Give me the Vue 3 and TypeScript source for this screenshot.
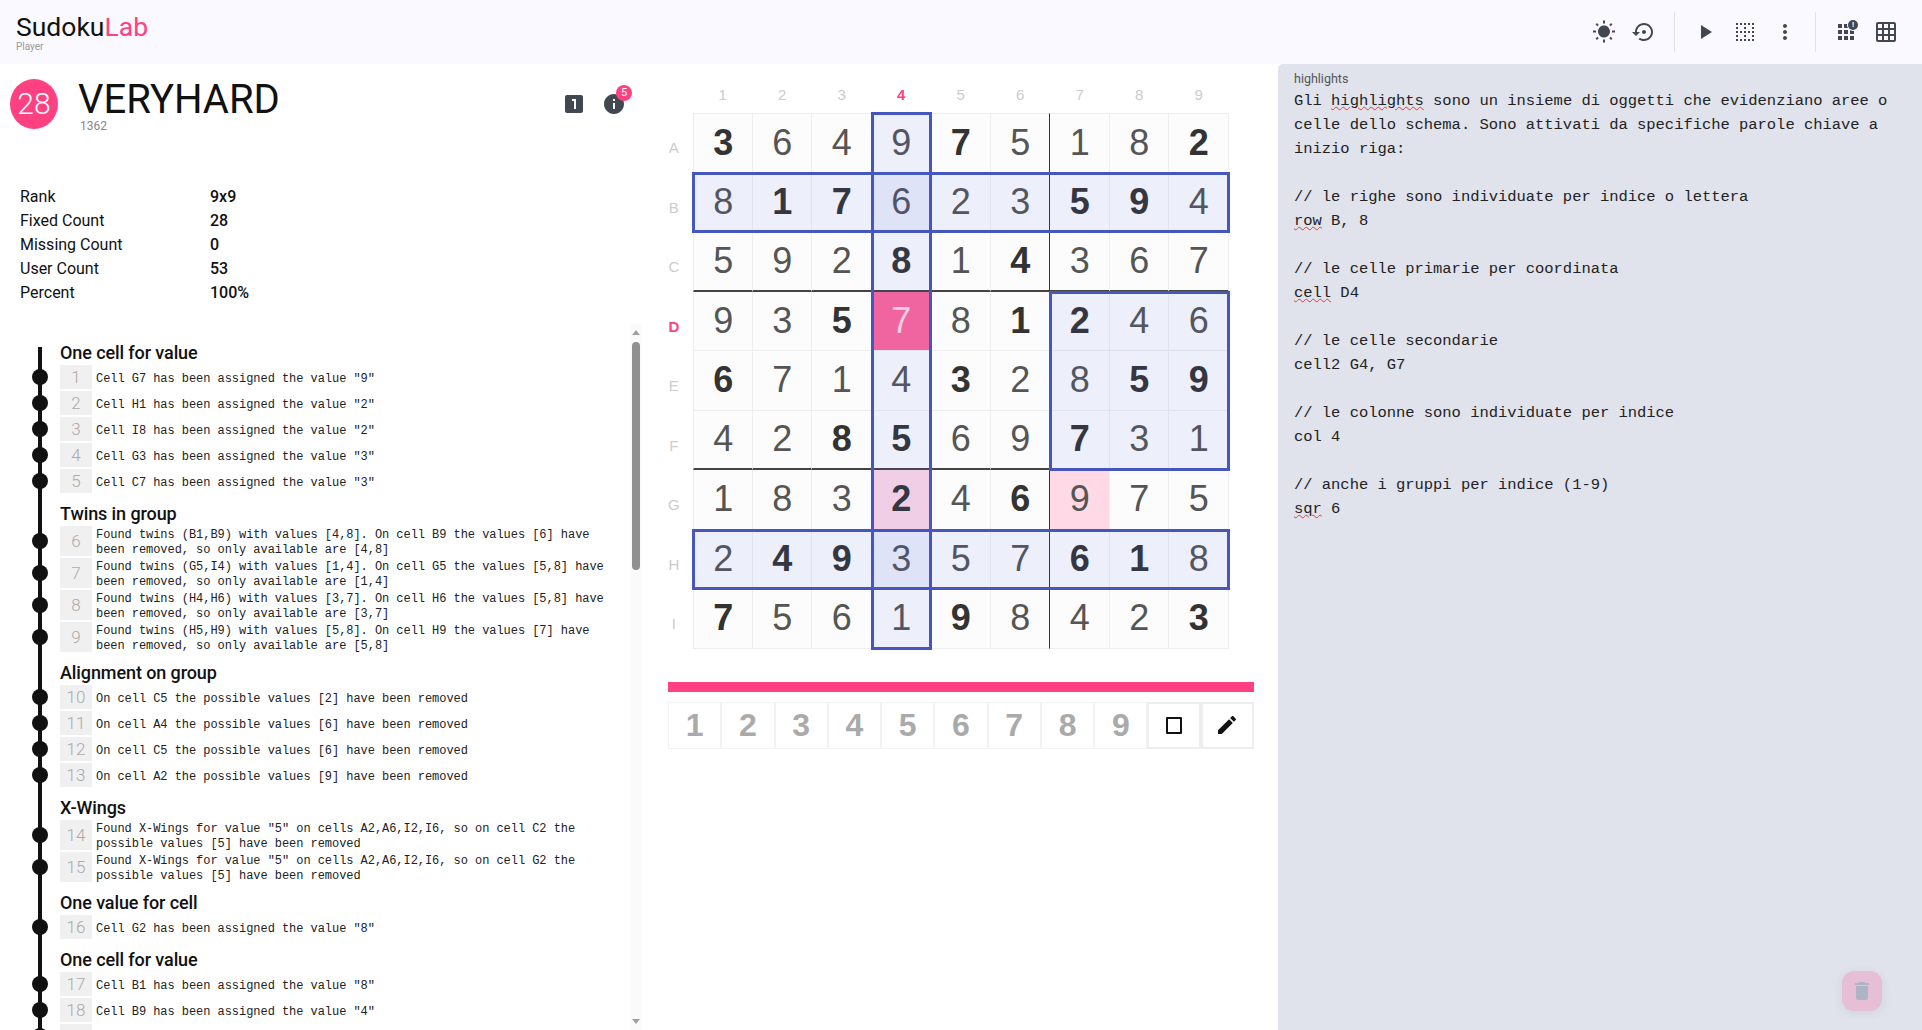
<script setup lang="ts">
import { computed } from 'vue';

interface LogGroup {
    title: string;
    items: string[];
}

const CELL = 59.5;
const rowNames: string[] = ['A', 'B', 'C', 'D', 'E', 'F', 'G', 'H', 'I'];
const columns: number[] = [1, 2, 3, 4, 5, 6, 7, 8, 9];

const values: string[] = [
    '364975182', '817623594', '592814367',
    '935781246', '671432859', '428569731',
    '183246975', '249357618', '756198423',
];
const fixed: string[] = [
    '100010001', '011000110', '000101000',
    '001001100', '100010011', '001100100',
    '000101000', '011000110', '100010001',
];

const cells = computed(() => values.flatMap((line: string, r: number) =>
    line.split('').map((value: string, c: number) => ({
        key: `${r}-${c}`,
        value,
        classes: {
            bold: fixed[r][c] === '1',
            primary: r === 3 && c === 3,
            secondary: (r === 6 && c === 3) || (r === 6 && c === 6),
            'line-right': c === 5 || c === 2,
            'line-bottom': r === 2 || r === 5,
        },
    }))));

const areas: [number, number, number, number][] = [
    [0, 3, 9, 1],
    [1, 0, 1, 9],
    [7, 0, 1, 9],
    [3, 6, 3, 3],
];

function areaStyle(area: [number, number, number, number]): Record<string, string> {
    const [row, col, rows, cols] = area;
    return {
        top: `${row * CELL - 1}px`,
        left: `${col * CELL - 1}px`,
        height: `${rows * CELL + 2}px`,
        width: `${cols * CELL + 2}px`,
    };
}

const stats: [string, string][] = [
    ['Rank', '9x9'],
    ['Fixed Count', '28'],
    ['Missing Count', '0'],
    ['User Count', '53'],
    ['Percent', '100%'],
];

const groups: LogGroup[] = [
    {
        title: 'One cell for value',
        items: [
            'Cell G7 has been assigned the value "9"',
            'Cell H1 has been assigned the value "2"',
            'Cell I8 has been assigned the value "2"',
            'Cell G3 has been assigned the value "3"',
            'Cell C7 has been assigned the value "3"',
        ],
    },
    {
        title: 'Twins in group',
        items: [
            'Found twins (B1,B9) with values [4,8]. On cell B9 the values [6] have been removed, so only available are [4,8]',
            'Found twins (G5,I4) with values [1,4]. On cell G5 the values [5,8] have been removed, so only available are [1,4]',
            'Found twins (H4,H6) with values [3,7]. On cell H6 the values [5,8] have been removed, so only available are [3,7]',
            'Found twins (H5,H9) with values [5,8]. On cell H9 the values [7] have been removed, so only available are [5,8]',
        ],
    },
    {
        title: 'Alignment on group',
        items: [
            'On cell C5 the possible values [2] have been removed',
            'On cell A4 the possible values [6] have been removed',
            'On cell C5 the possible values [6] have been removed',
            'On cell A2 the possible values [9] have been removed',
        ],
    },
    {
        title: 'X-Wings',
        items: [
            'Found X-Wings for value "5" on cells A2,A6,I2,I6, so on cell C2 the possible values [5] have been removed',
            'Found X-Wings for value "5" on cells A2,A6,I2,I6, so on cell G2 the possible values [5] have been removed',
        ],
    },
    {
        title: 'One value for cell',
        items: ['Cell G2 has been assigned the value "8"'],
    },
    {
        title: 'One cell for value',
        items: [
            'Cell B1 has been assigned the value "8"',
            'Cell B9 has been assigned the value "4"',
        ],
    },
];

function numberOf(groupIndex: number, itemIndex: number): number {
    let total = 0;
    for (let i = 0; i < groupIndex; i++) total += groups[i].items.length;
    return total + itemIndex + 1;
}
</script>

<template>
    <div class="page">
        <header class="toolbar">
            <div class="brand">
                <div class="logo">Sudoku<span class="logo-accent">Lab</span></div>
                <div class="logo-sub">Player</div>
            </div>
            <div class="tools">
                <button class="tool"><svg viewBox="0 0 24 24"><path d="M6.76 4.84l-1.8-1.79-1.41 1.41 1.79 1.79 1.42-1.41zM4 10.5H1v2h3v-2zm9-9.95h-2V3.5h2V.55zm7.45 3.91l-1.41-1.41-1.79 1.79 1.41 1.41 1.79-1.79zm-3.21 13.7l1.79 1.8 1.41-1.41-1.8-1.79-1.4 1.4zM20 10.5v2h3v-2h-3zm-8-5c-3.31 0-6 2.69-6 6s2.69 6 6 6 6-2.69 6-6-2.69-6-6-6zm-1 16.95h2V19.5h-2v2.95zm-7.45-3.91l1.41 1.41 1.79-1.8-1.41-1.41-1.79 1.8z" /></svg></button>
                <button class="tool"><svg viewBox="0 0 24 24"><path d="M14 12c0-1.1-.9-2-2-2s-2 .9-2 2 .9 2 2 2 2-.9 2-2zm-2-9c-4.97 0-9 4.03-9 9H0l4 4 4-4H5c0-3.87 3.13-7 7-7s7 3.13 7 7-3.13 7-7 7c-1.51 0-2.91-.49-4.06-1.3l-1.42 1.44C8.04 20.3 9.94 21 12 21c4.97 0 9-4.03 9-9s-4.03-9-9-9z" /></svg></button>
                <span class="divider"></span>
                <button class="tool"><svg viewBox="0 0 24 24"><path d="M8 5v14l11-7z" /></svg></button>
                <button class="tool"><svg viewBox="0 0 24 24"><path d="M7 5h2V3H7v2zm0 8h2v-2H7v2zm0 8h2v-2H7v2zm4-4h2v-2h-2v2zm0 4h2v-2h-2v2zm-8 0h2v-2H3v2zm0-4h2v-2H3v2zm0-4h2v-2H3v2zm0-4h2V7H3v2zm0-4h2V3H3v2zm8 8h2v-2h-2v2zm8 4h2v-2h-2v2zm0-4h2v-2h-2v2zm0 8h2v-2h-2v2zm0-12h2V7h-2v2zm-8 0h2V7h-2v2zm8-6v2h2V3h-2zm-8 2h2V3h-2v2zm4 16h2v-2h-2v2zm0-8h2v-2h-2v2zm0-8h2V3h-2v2z" /></svg></button>
                <button class="tool"><svg viewBox="0 0 24 24"><path d="M12 8c1.1 0 2-.9 2-2s-.9-2-2-2-2 .9-2 2 .9 2 2 2zm0 2c-1.1 0-2 .9-2 2s.9 2 2 2 2-.9 2-2-.9-2-2-2zm0 6c-1.1 0-2 .9-2 2s.9 2 2 2 2-.9 2-2-.9-2-2-2z" /></svg></button>
                <span class="divider"></span>
                <button class="tool">
                    <svg viewBox="0 0 24 24"><path d="M4 8h4V4H4v4zm6 12h4v-4h-4v4zm-6 0h4v-4H4v4zm0-6h4v-4H4v4zm6 0h4v-4h-4v4zm6-10v4h4V4h-4zm-6 4h4V4h-4v4zm6 6h4v-4h-4v4zm0 6h4v-4h-4v4z" /></svg>
                    <span class="tool-badge">!</span>
                </button>
                <button class="tool"><svg viewBox="0 0 24 24"><path d="M20 2H4c-1.1 0-2 .9-2 2v16c0 1.1.9 2 2 2h16c1.1 0 2-.9 2-2V4c0-1.1-.9-2-2-2zM8 20H4v-4h4v4zm0-6H4v-4h4v4zm0-6H4V4h4v4zm6 12h-4v-4h4v4zm0-6h-4v-4h4v4zm0-6h-4V4h4v4zm6 12h-4v-4h4v4zm0-6h-4v-4h4v4zm0-6h-4V4h4v4z" /></svg></button>
            </div>
        </header>

        <main class="content">
            <section class="left">
                <div class="summary">
                    <div class="avatar">28</div>
                    <div class="heading">
                        <div class="title">VERYHARD</div>
                        <div class="subtitle">1362</div>
                    </div>
                    <div class="summary-icons">
                        <svg class="summary-icon" viewBox="0 0 24 24"><path d="M19 3H5c-1.1 0-2 .9-2 2v14c0 1.1.9 2 2 2h14c1.1 0 2-.9 2-2V5c0-1.1-.9-2-2-2zm-5 14h-2V9h-2V7h4v10z" /></svg>
                        <div class="info">
                            <svg class="summary-icon" viewBox="0 0 24 24"><path d="M12 2C6.48 2 2 6.48 2 12s4.48 10 10 10 10-4.48 10-10S17.52 2 12 2zm1 15h-2v-6h2v6zm0-8h-2V7h2v2z" /></svg>
                            <span class="info-badge">5</span>
                        </div>
                    </div>
                </div>

                <div class="stats">
                    <div v-for="stat in stats" :key="stat[0]" class="stat">
                        <span class="stat-name">{{ stat[0] }}</span>
                        <strong class="stat-value">{{ stat[1] }}</strong>
                    </div>
                </div>

                <div class="log">
                    <div class="log-body">
                        <div v-for="(group, g) in groups" :key="g" class="log-group">
                            <h3 class="log-title">{{ group.title }}</h3>
                            <div v-for="(item, i) in group.items" :key="i" class="log-item">
                                <span class="log-number">{{ numberOf(g, i) }}</span>
                                <span class="log-text">{{ item }}</span>
                            </div>
                            <div v-if="g === groups.length - 1" class="log-item">
                                <span class="log-number"></span>
                            </div>
                        </div>
                    </div>
                    <div class="scrollbar">
                        <span class="arrow-up"></span>
                        <span class="thumb"></span>
                        <span class="arrow-down"></span>
                    </div>
                </div>
            </section>

            <section class="center">
                <div class="col-labels">
                    <span v-for="col in columns" :key="col" class="col-label" :class="{ active: col === 4 }">{{ col }}</span>
                </div>
                <div class="board-row">
                    <div class="row-labels">
                        <span v-for="name in rowNames" :key="name" class="row-label" :class="{ active: name === 'D' }">{{ name }}</span>
                    </div>
                    <div class="board">
                        <div v-for="cell in cells" :key="cell.key" class="cell" :class="cell.classes">{{ cell.value }}</div>
                        <div v-for="(area, a) in areas" :key="a" class="area" :style="areaStyle(area)"></div>
                    </div>
                </div>
                <div class="progress"></div>
                <div class="palette">
                    <button v-for="col in columns" :key="col" class="key">{{ col }}</button>
                    <button class="key key-tool"><span class="square"></span></button>
                    <button class="key key-tool">
                        <svg viewBox="0 0 24 24"><path d="M20.71 7.04c.39-.39.39-1.04 0-1.41l-2.34-2.34c-.37-.39-1.02-.39-1.41 0l-1.84 1.83 3.75 3.75M3 17.25V21h3.75L17.81 9.93l-3.75-3.75L3 17.25z" /></svg>
                    </button>
                </div>
            </section>

            <aside class="editor">
                <div class="editor-label">highlights</div>
                <div class="editor-text">
                    <div>Gli <span class="typo">highlights</span> sono un insieme di oggetti che evidenziano aree o celle dello schema. Sono attivati da specifiche parole chiave a inizio riga:</div>
                    <div class="blank"></div>
                    <div>// le righe sono individuate per indice o lettera</div>
                    <div><span class="typo">row</span> B, 8</div>
                    <div class="blank"></div>
                    <div>// le celle primarie per coordinata</div>
                    <div><span class="typo">cell</span> D4</div>
                    <div class="blank"></div>
                    <div>// le celle secondarie</div>
                    <div>cell2 G4, G7</div>
                    <div class="blank"></div>
                    <div>// le colonne sono individuate per indice</div>
                    <div>col 4</div>
                    <div class="blank"></div>
                    <div>// anche i gruppi per indice (1-9)</div>
                    <div><span class="typo">sqr</span> 6</div>
                </div>
                <button class="fab">
                    <svg viewBox="0 0 24 24"><path d="M6 19c0 1.1.9 2 2 2h8c1.1 0 2-.9 2-2V7H6v12zM19 4h-3.5l-1-1h-5l-1 1H5v2h14V4z" /></svg>
                </button>
            </aside>
        </main>
    </div>
</template>

<style scoped>
.page {
    display: flex;
    flex-direction: column;
    height: 100vh;
    overflow: hidden;
    background: #fff;
    color: #111;
    font-family: Roboto, sans-serif;
}

button {
    border: 0;
    padding: 0;
    background: none;
    font: inherit;
}

.toolbar {
    display: flex;
    flex: none;
    align-items: center;
    justify-content: space-between;
    height: 64px;
    padding: 0 16px;
    box-sizing: border-box;
    background: #f9f9ff;
}

.logo {
    margin-top: 1px;
    font-size: 26.5px;
    line-height: 30px;
}

.logo-accent {
    color: #ff4081;
}

.logo-sub {
    margin-top: -1px;
    font-size: 10px;
    line-height: 12px;
    color: #999;
}

.tools {
    display: flex;
    align-items: center;
}

.tool {
    position: relative;
    display: flex;
    align-items: center;
    justify-content: center;
    width: 40px;
    height: 40px;
}

.tool svg {
    width: 24px;
    height: 24px;
    fill: #424852;
}

.tool-badge {
    position: absolute;
    top: 8px;
    right: 8px;
    width: 10px;
    height: 10px;
    border-radius: 50%;
    background: #424852;
    box-shadow: 0 0 0 1px #f9f9ff;
    color: #fff;
    font-size: 8px;
    font-weight: 700;
    line-height: 10px;
    text-align: center;
}

.divider {
    width: 1px;
    height: 40px;
    margin: 0 10px;
    background: #e2e3ea;
}

.content {
    display: flex;
    flex: 1;
    min-height: 0;
}

.left {
    display: flex;
    flex: none;
    flex-direction: column;
    width: 644px;
}

.summary {
    display: flex;
    flex: none;
    height: 80px;
    padding: 15px 10px 0;
    box-sizing: border-box;
}

.avatar {
    flex: none;
    width: 48px;
    height: 50px;
    border-radius: 50%;
    background: #ff4081;
    color: #fff;
    font-size: 30px;
    font-weight: 300;
    line-height: 50px;
    text-align: center;
}

.heading {
    margin-left: 20px;
}

.title {
    margin-top: 1px;
    font-size: 40px;
    line-height: 39px;
}

.subtitle {
    margin-left: 2px;
    font-size: 12px;
    line-height: 14px;
    color: #888;
}

.summary-icons {
    display: flex;
    align-items: center;
    gap: 16px;
    height: 38px;
    margin-left: auto;
    margin-right: 8px;
    margin-top: 6px;
}

.summary-icon {
    display: block;
    width: 24px;
    height: 24px;
    fill: #424852;
}

.info {
    position: relative;
}

.info-badge {
    position: absolute;
    top: -7px;
    right: -6px;
    width: 16px;
    height: 16px;
    border-radius: 50%;
    background: #ff4081;
    color: #fff;
    font-size: 11px;
    line-height: 16px;
    text-align: center;
}

.stats {
    flex: none;
    height: 180px;
    padding: 40px 20px 0;
    box-sizing: border-box;
}

.stat {
    display: flex;
    height: 24px;
    align-items: center;
    font-size: 16px;
}

.stat-name {
    width: 190px;
}

.stat-value {
    font-weight: 500;
}

.log {
    position: relative;
    flex: 1;
    min-height: 0;
    overflow: hidden;
}

.log-body {
    position: relative;
    height: 100%;
    padding-top: 17px;
    box-sizing: border-box;
}

.log-body::before {
    content: '';
    position: absolute;
    top: 23px;
    bottom: 0;
    left: 38px;
    width: 4px;
    background: #111;
}

.log-group {
    padding-left: 60px;
    padding-bottom: 7px;
}

.log-title {
    margin: 0;
    font-size: 18px;
    font-weight: 500;
    letter-spacing: -0.1px;
    line-height: 24px;
}

.log-item {
    position: relative;
    display: flex;
    align-items: center;
    min-height: 24px;
    margin-bottom: 2px;
}

.log-item::before {
    content: '';
    position: absolute;
    top: 50%;
    left: -28px;
    width: 16px;
    height: 16px;
    margin-top: -8px;
    border-radius: 50%;
    background: #111;
}

.log-number {
    align-self: stretch;
    display: flex;
    flex: none;
    align-items: center;
    justify-content: center;
    width: 32px;
    margin-right: 4px;
    background: #f0f0f0;
    color: #aaa;
    font-size: 17px;
    font-weight: 300;
}

.log-text {
    width: 520px;
    padding-top: 2px;
    margin-bottom: -2px;
    font-family: "Liberation Mono", monospace;
    font-size: 12px;
    letter-spacing: -0.05px;
    line-height: 15px;
    color: #222;
}

.scrollbar {
    position: absolute;
    top: 0;
    right: 2px;
    bottom: 0;
    display: flex;
    flex-direction: column;
    align-items: center;
    width: 12px;
    padding: 6px 0;
    box-sizing: border-box;
    background: #fafafa;
}

.arrow-up,
.arrow-down {
    width: 0;
    height: 0;
    border-left: 4px solid transparent;
    border-right: 4px solid transparent;
}

.arrow-up {
    border-bottom: 5px solid #a0a0a0;
}

.arrow-down {
    margin-top: auto;
    border-top: 5px solid #a0a0a0;
}

.thumb {
    width: 8px;
    height: 228px;
    margin-top: 7px;
    border-radius: 4px;
    background: #909090;
}

.center {
    flex: none;
    width: 634px;
    padding-left: 24px;
    box-sizing: border-box;
}

.col-labels {
    display: grid;
    grid-template-columns: repeat(9, 59.5px);
    height: 49px;
    margin-left: 25px;
    align-items: end;
    padding-bottom: 10px;
    box-sizing: border-box;
}

.col-label,
.row-label {
    font-family: "Liberation Sans", sans-serif;
    font-size: 15px;
    line-height: 16px;
    color: #ccc;
    text-align: center;
}

.col-label.active,
.row-label.active {
    color: #ff4081;
    font-weight: 700;
}

.board-row {
    display: flex;
}

.row-labels {
    display: grid;
    flex: none;
    grid-template-rows: repeat(9, 59.5px);
    width: 5px;
    margin-right: 20px;
    justify-items: center;
}

.row-label {
    padding-top: 27px;
}

.board {
    position: relative;
    display: grid;
    grid-template-columns: repeat(9, 59.5px);
    grid-template-rows: repeat(9, 59.5px);
}

.cell {
    display: flex;
    align-items: center;
    justify-content: center;
    padding-left: 1px;
    box-sizing: border-box;
    border-right: 1px solid #eee;
    border-bottom: 1px solid #eee;
    background: #fcfcfc;
    color: #555;
    font-family: "Liberation Sans", sans-serif;
    font-size: 36px;
}

.cell:nth-child(9n + 1) {
    border-left: 1px solid #eee;
}

.cell:nth-child(-n + 9) {
    border-top: 1px solid #eee;
}

.cell.bold {
    color: #333;
    font-weight: 700;
}

.cell.line-right {
    border-right-color: #333;
}

.cell.line-bottom {
    border-bottom: 2px solid #444;
}

.cell.primary {
    background: rgba(255, 64, 129, 0.8);
    color: rgba(255, 255, 255, 0.75);
}

.cell.secondary {
    background: rgba(255, 64, 129, 0.2);
}

.area {
    position: absolute;
    box-sizing: border-box;
    border: 3px solid #4556be;
    background: rgba(60, 90, 235, 0.08);
}

.progress {
    width: 586px;
    height: 10px;
    margin-top: 33px;
    background: #ff4081;
}

.palette {
    display: grid;
    grid-template-columns: repeat(11, 1fr);
    width: 586px;
    height: 47px;
    margin-top: 10px;
}

.key {
    display: flex;
    align-items: center;
    justify-content: center;
    border: 1px solid #f2f2f2;
    color: #aaa;
    font-family: "Liberation Sans", sans-serif;
    font-size: 32px;
    font-weight: 700;
}

.key-tool {
    border: 2px solid #eee;
}

.key-tool svg {
    width: 24px;
    height: 24px;
    fill: #111;
}

.square {
    width: 16px;
    height: 17px;
    box-sizing: border-box;
    border: 2px solid #111;
    border-radius: 1px;
}

.editor {
    position: relative;
    flex: 1;
    padding: 8px 16px;
    border-top-left-radius: 5px;
    background: #e0e3ec;
}

.editor-label {
    font-size: 12.5px;
    line-height: 14px;
    color: #555;
}

.editor-text {
    width: 610px;
    margin-top: 3px;
    font-family: "Liberation Mono", monospace;
    font-size: 15.5px;
    letter-spacing: -0.03px;
    line-height: 24px;
    color: #222;
}

.blank {
    height: 24px;
}

.typo {
    text-decoration: underline wavy #e53935;
    text-decoration-thickness: 1px;
}

.fab {
    position: absolute;
    right: 40px;
    bottom: 19px;
    display: flex;
    align-items: center;
    justify-content: center;
    width: 40px;
    height: 40px;
    border-radius: 12px;
    background: #e6bfd6;
    box-shadow: 0 2px 8px rgba(120, 120, 150, 0.15);
}

.fab svg {
    width: 24px;
    height: 24px;
    fill: #aeb4c6;
}
</style>

<style>
html,
body {
    overflow: hidden;
}
</style>
